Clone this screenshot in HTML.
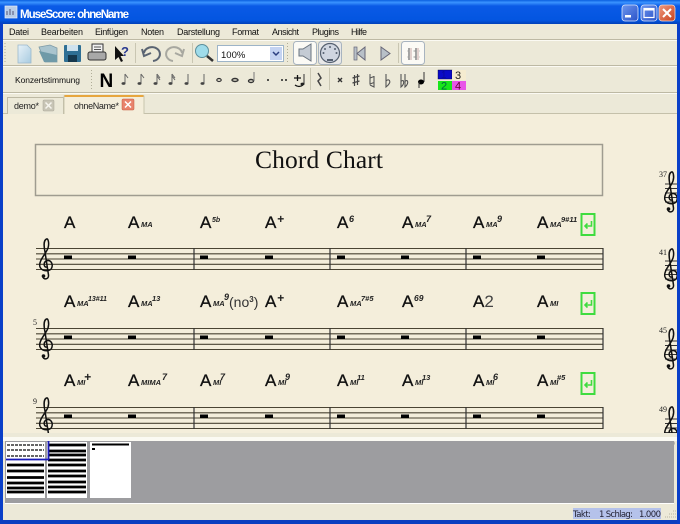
<!DOCTYPE html>
<html><head><meta charset="utf-8"><title>MuseScore: ohneName</title>
<style>
html,body{margin:0;padding:0;background:#ece9d8;width:680px;height:524px;overflow:hidden}
svg{display:block;filter:blur(.35px)}
text{font-family:"Liberation Sans",sans-serif}
.m{font-size:9px;fill:#111}
.c{font-size:17px;fill:#111;stroke:#111;stroke-width:.3}
.s{font-size:7.5px;font-weight:bold;font-style:italic;fill:#222}
.u{font-size:9px;font-weight:bold;font-style:italic;fill:#222}
.n{font-size:8px;fill:#222;font-family:"Liberation Serif",serif}
</style></head><body>
<svg width="680" height="524" viewBox="0 0 680 524" xmlns="http://www.w3.org/2000/svg">
<defs>
<linearGradient id="tb" x1="0" y1="0" x2="0" y2="1"><stop offset="0" stop-color="#0a5fe0"/><stop offset=".1" stop-color="#3a93ff"/><stop offset=".25" stop-color="#0a5ae6"/><stop offset=".85" stop-color="#0355e0"/><stop offset="1" stop-color="#0240b8"/></linearGradient>
<linearGradient id="bb" x1="0" y1="0" x2="1" y2="1"><stop offset="0" stop-color="#6d96ee"/><stop offset="1" stop-color="#2a52c8"/></linearGradient>
<linearGradient id="rb" x1="0" y1="0" x2="1" y2="1"><stop offset="0" stop-color="#ef9a80"/><stop offset="1" stop-color="#c8401c"/></linearGradient>
<linearGradient id="doc" x1="0" y1="0" x2="1" y2="1"><stop offset="0" stop-color="#e8f2f8"/><stop offset="1" stop-color="#a8cbe0"/></linearGradient>
<g id="clef" fill="none" stroke="#111" stroke-width="1.5">
<path d="M8 19C5 20 4 15 7 13C11 11 14 15 13 19C12 24 3 24 1 19C-1 13 7 6 9 0C10.5-5 9-10 7.5-9C5-8 4.5-3 6 4L9.5 27C10 32 4 32 3.5 28"/>
<circle cx="4.500" cy="28" r="1.800" fill="#111" stroke="none"/>
</g>
<g id="staff">
<path d="M36 .5H603M36 5.800H603M36 11H603M36 16.300H603M36 21.500H603" stroke="#4a4433" stroke-width="1.100" fill="none"/>
<path d="M194 0V22M330 0V22M466 0V22M603 0V22" stroke="#333" stroke-width="1.200" fill="none"/>
<use href="#clef" x="39" y="0"/>
<g fill="#000"><rect x="64" y="7.500" width="8" height="3.500"/><rect x="128" y="7.500" width="8" height="3.500"/><rect x="200" y="7.500" width="8" height="3.500"/><rect x="265" y="7.500" width="8" height="3.500"/><rect x="337" y="7.500" width="8" height="3.500"/><rect x="401" y="7.500" width="8" height="3.500"/><rect x="473" y="7.500" width="8" height="3.500"/><rect x="537" y="7.500" width="8" height="3.500"/></g>
</g>
<g id="rstaff"><path d="M665 3H677M665 7.500H677M665 12H677M665 16.500H677M665 21H677" stroke="#333" stroke-width="1"/><use href="#clef" x="664" y="0"/></g>
<g id="ret"><rect x="1" y="1" width="13" height="21" fill="none" stroke="#3fdc3f" stroke-width="2"/><path d="M11 8V13H4.500M7 10.500L4.500 13L7 15.500" fill="none" stroke="#3fdc3f" stroke-width="1.600"/></g>
<g id="q"><path d="M3 1V10" stroke="#666" stroke-width="1"/><ellipse cx="1.500" cy="10.500" rx="2" ry="1.400" fill="#444"/></g>
</defs>

<rect width="680" height="524" fill="#ece9d8"/>
<!-- window frame -->
<rect x="0" y="0" width="680" height="24" fill="url(#tb)"/>
<rect x="0" y="23" width="3" height="501" fill="#0a3fc8"/>
<rect x="677" y="23" width="3" height="501" fill="#0a3fc8"/>
<rect x="0" y="520" width="680" height="4" fill="#0a3fc0"/>
<!-- title -->
<rect x="5" y="6" width="12" height="12" fill="#b8cde8" stroke="#e8f0fa" stroke-width=".7"/><path d="M7 15V11M10 15V9M13 15V11" stroke="#557" stroke-width="1"/>
<text x="20" y="18" textLength="109" style="font-size:11.500px;font-weight:bold;fill:#fff">MuseScore: ohneName</text>
<rect x="622" y="5" width="16" height="16" rx="3" fill="url(#bb)" stroke="#dbe6fb" stroke-width=".8"/><rect x="625" y="15" width="6" height="2.500" fill="#fff"/>
<rect x="641" y="5" width="16" height="16" rx="3" fill="url(#bb)" stroke="#dbe6fb" stroke-width=".8"/><rect x="644" y="8.500" width="10" height="9" fill="none" stroke="#fff" stroke-width="1.200"/><path d="M644 9.500H654" stroke="#fff" stroke-width="2"/>
<rect x="659" y="5" width="16" height="16" rx="3" fill="url(#rb)" stroke="#f3d8cc" stroke-width=".8"/><path d="M663 9L671 17M671 9L663 17" stroke="#fff" stroke-width="2"/>
<!-- menu -->
<text class="m" x="9" y="35" textLength="20">Datei</text><text class="m" x="41" y="35" textLength="42">Bearbeiten</text><text class="m" x="95" y="35" textLength="33">Einfügen</text><text class="m" x="141" y="35" textLength="23">Noten</text><text class="m" x="177" y="35" textLength="43">Darstellung</text><text class="m" x="232" y="35" textLength="27">Format</text><text class="m" x="272" y="35" textLength="27">Ansicht</text><text class="m" x="312" y="35" textLength="27">Plugins</text><text class="m" x="351" y="35" textLength="16">Hilfe</text>
<path d="M3 39.500H677M3 65.500H677M3 92.500H677" stroke="#bdb9a4" stroke-width="1"/>
<path d="M3 40.500H677M3 66.500H677M3 93.500H677" stroke="#fbfaf3" stroke-width="1"/>
<!-- toolbar handles / separators -->
<path d="M5 43V63M91.500 70V90M287.500 43V63" stroke="#b0ad98" stroke-width="1" stroke-dasharray="1 2"/>
<path d="M135.500 43V63M192.500 43V63M398.500 43V63M310.500 68V90M329.500 68V90" stroke="#c9c6b2" stroke-width="1"/>
<!-- new -->
<path d="M18 45H27L31 49V63H18Z" fill="url(#doc)" stroke="#9ab8cc" stroke-width=".8"/>
<!-- open -->
<path d="M39 47L50 45L57 48V62H45Z" fill="#a9c4ce" stroke="#7d9aa6" stroke-width=".8"/><path d="M39 51L57 55V62H44Z" fill="#6f9aa8"/>
<!-- save -->
<rect x="64" y="45" width="17" height="17" rx="1" fill="#2f6f94"/><rect x="67" y="45" width="11" height="6" fill="#cfe2ee"/><rect x="68" y="55" width="9" height="7" fill="#16384d"/>
<!-- print -->
<rect x="92" y="44" width="11" height="9" fill="#f2f2f2" stroke="#333" stroke-width="1"/><path d="M94 47H101M94 49.500H101" stroke="#555"/><rect x="88" y="52" width="18" height="8" rx="2" fill="#a8a8a8" stroke="#333"/>
<!-- help -->
<path d="M115 46L115 60L118.500 57L121 62L123 61L120.500 56L124 56Z" fill="#111"/><text x="121" y="56" style="font-size:13px;font-weight:bold;fill:#2a3a90">?</text>
<!-- undo/redo -->
<path d="M144 53A8 7 0 1 1 153 61M142 49L144 56L151 53" fill="none" stroke="#5a6472" stroke-width="2"/>
<path d="M182 53A8 7 0 1 0 173 61M184 49L182 56L175 53" fill="none" stroke="#a8a8a0" stroke-width="2"/>
<!-- zoom -->
<circle cx="202" cy="51" r="6.500" fill="#9fdcea" stroke="#5b8f9c" stroke-width="1"/><path d="M207 56L213 61" stroke="#333" stroke-width="2.500"/>
<!-- combo -->
<rect x="217.500" y="45.500" width="66" height="16" fill="#fff" stroke="#9db4c8"/><rect x="270" y="47" width="12" height="13" fill="#c4d3f2"/><path d="M273 52L276 55L279 52" fill="none" stroke="#2b3f80" stroke-width="1.500"/>
<text x="221" y="58" style="font-size:9.500px;fill:#111">100%</text>
<!-- speaker/midi buttons -->
<rect x="293.500" y="41.500" width="23" height="23" rx="3" fill="#fbfaf5" stroke="#a8b4c0"/>
<path d="M299 49H303L311 44V61L303 56H299Z" fill="#c4cbd4" stroke="#6a7480"/>
<rect x="318.500" y="41.500" width="23" height="23" rx="3" fill="#e8e8e8" stroke="#a8b4c0"/>
<circle cx="330" cy="53" r="9.500" fill="#cfd5e0" stroke="#556070" stroke-width="1.200"/><g fill="#556070"><circle cx="330" cy="47" r="1"/><circle cx="325" cy="49" r="1"/><circle cx="335" cy="49" r="1"/><circle cx="323.500" cy="53" r="1"/><circle cx="336.500" cy="53" r="1"/><rect x="327" y="59" width="6" height="2"/></g>
<!-- rewind play -->
<rect x="354" y="47" width="3" height="13" fill="#b8c0c8" stroke="#667" stroke-width=".7"/><path d="M365 47V60L357 53.500Z" fill="#b8c0c8" stroke="#667"/>
<path d="M381 47L390 53.500L381 60Z" fill="#b8c0c8" stroke="#667"/>
<rect x="401.500" y="41.500" width="23" height="23" rx="3" fill="#fbfaf5" stroke="#a8b4c0"/>
<path d="M409 48V60M416 48V60" stroke="#888" stroke-width="1.500"/><path d="M411 48V60M418 48V60" stroke="#c8a8a8" stroke-width="1"/><path d="M407.500 51H420M407.500 57H420" stroke="#999" stroke-width="1" stroke-dasharray="2 4"/>
<!-- toolbar 2 -->
<text x="15" y="83" textLength="65" style="font-size:8.500px;fill:#111">Konzertstimmung</text>
<text x="99.500" y="87" style="font-size:19px;font-weight:bold;fill:#000">N</text>
<use href="#q" x="122" y="73"/><use href="#q" x="138" y="73"/><use href="#q" x="154" y="73"/><use href="#q" x="169" y="73"/><use href="#q" x="185" y="73"/><use href="#q" x="201" y="73"/>
<path d="M125 74L128 78M141 74L144 78M157 74L160 78M157 76L160 80M172 74L175 78M172 76L175 80" stroke="#666" stroke-width="1"/>
<ellipse cx="219" cy="80" rx="2.200" ry="1.500" fill="none" stroke="#333" stroke-width="1.200"/>
<ellipse cx="235" cy="80" rx="3" ry="1.500" fill="none" stroke="#333" stroke-width="1.400"/>
<ellipse cx="251" cy="81" rx="2.500" ry="1.500" fill="none" stroke="#333" stroke-width="1.400"/><path d="M254 72V81" stroke="#777"/>
<circle cx="268" cy="80" r="1" fill="#222"/><circle cx="282" cy="80" r="1" fill="#222"/><circle cx="286" cy="80" r="1" fill="#222"/>
<path d="M294 78H301M297.500 75V81M295 85Q299 88 303 85" stroke="#111" stroke-width="1.300" fill="none"/><path d="M304 74V84" stroke="#333"/><ellipse cx="302.500" cy="84" rx="2" ry="1.400" fill="#222"/>
<path d="M318 73L321 78L318 81L321 86" stroke="#444" stroke-width="1.500" fill="none"/>
<path d="M338 78L342 82M342 78L338 82" stroke="#333" stroke-width="1.400"/>
<path d="M354.500 75V86M357.500 74V85M352.500 78L359.500 76M352.500 83L359.500 81" stroke="#444" stroke-width="1.200"/>
<path d="M370 74V84L374 82.500M374 76V87L370 85" stroke="#555" stroke-width="1.100" fill="none"/><path d="M370 78L374 76.500" stroke="#555"/>
<path d="M386 74V87Q391 83 389.500 80.500Q388 79 386 81" stroke="#555" stroke-width="1.100" fill="none"/>
<path d="M401 74V87Q404.500 84 403.500 81Q402.500 80 401 81.500M405 74V87Q408.500 84 407.500 81Q406.500 80 405 81.500" stroke="#555" stroke-width="1.100" fill="none"/>
<path d="M424 72V82" stroke="#333" stroke-width="1"/><ellipse cx="421" cy="82" rx="3" ry="2.500" fill="#000"/><path d="M419 82V88" stroke="#333"/>
<!-- colours -->
<rect x="438" y="70" width="14" height="9" fill="#0a0ac8" stroke="#003" stroke-width=".4"/><text x="441" y="78" style="font-size:10px;fill:#0a0a9a">1</text>
<rect x="452" y="70" width="14" height="10" fill="#f5ecd0"/><text x="455" y="79" style="font-size:11px;fill:#222">3</text>
<rect x="438" y="81" width="14" height="9" fill="#19e619"/><text x="441" y="89.500" style="font-size:11px;fill:#064">2</text>
<rect x="452" y="81" width="14" height="9" fill="#e855e8"/><text x="455" y="89.500" style="font-size:11px;fill:#603">4</text>
<!-- tabs -->
<path d="M3 113.500H677" stroke="#c4c0aa"/>
<rect x="7.500" y="97.500" width="56" height="17" fill="#ece9d8" stroke="#bdb9a4"/>
<text x="14" y="109" textLength="25" style="font-size:9px;fill:#222">demo*</text>
<rect x="43" y="100" width="11" height="11" rx="1" fill="#c8c5b6" stroke="#a8a596" stroke-width=".5"/><path d="M45.500 102.500L51.500 108.500M51.500 102.500L45.500 108.500" stroke="#f6f5ee" stroke-width="1.500"/>
<rect x="64" y="95" width="80" height="19" fill="#f4eedb"/><path d="M64 114V96.500Q64 95.500 65 95.500H143Q144 95.500 144 96.500V114" fill="none" stroke="#c9c5ae"/><rect x="64.500" y="95" width="79" height="2" fill="#e7a63e"/>
<text x="74" y="109" textLength="45" style="font-size:9px;fill:#222">ohneName*</text>
<rect x="122" y="99" width="12" height="11" rx="1" fill="#e8836c" stroke="#c65a3f" stroke-width=".5"/><path d="M125 101.500L131 107.500M131 101.500L125 107.500" stroke="#fff" stroke-width="1.500"/>
<!-- canvas -->
<rect x="3" y="114" width="674" height="323" fill="#f4eedb"/>
<rect x="35.500" y="144.500" width="567" height="51" fill="none" stroke="#9f9c90" stroke-width="1.500"/>
<text x="255" y="168" textLength="128" style="font-family:'Liberation Serif',serif;font-size:25.500px;fill:#111">Chord Chart</text>

<use href="#staff" y="248"/><use href="#staff" y="328"/><use href="#staff" y="407"/>
<text class="n" x="33" y="325">5</text><text class="n" x="33" y="404">9</text>

<!-- row 1 -->
<text class="c" x="64" y="228">A</text>
<text class="c" x="128" y="228">A</text><text class="s" x="141" y="227">MA</text>
<text class="c" x="200" y="228">A</text><text class="u" x="212" y="222" style="font-size:7px">5b</text>
<text class="c" x="265" y="228">A</text><text class="u" x="277" y="223" style="font-size:12px">+</text>
<text class="c" x="337" y="228">A</text><text class="u" x="349" y="222">6</text>
<text class="c" x="402" y="228">A</text><text class="s" x="415" y="227">MA</text><text class="u" x="426" y="222">7</text>
<text class="c" x="473" y="228">A</text><text class="s" x="486" y="227">MA</text><text class="u" x="497" y="222">9</text>
<text class="c" x="537" y="228">A</text><text class="s" x="550" y="227">MA</text><text class="u" x="561" y="222" style="font-size:7.500px">9#11</text>
<!-- row 2 -->
<text class="c" x="64" y="307">A</text><text class="s" x="77" y="306">MA</text><text class="u" x="88" y="301" style="font-size:7px">13#11</text>
<text class="c" x="128" y="307">A</text><text class="s" x="141" y="306">MA</text><text class="u" x="152" y="301" style="font-size:7.500px">13</text>
<text class="c" x="200" y="307">A</text><text class="s" x="213" y="306">MA</text><text class="u" x="224" y="300">9</text><text x="229" y="307" style="font-size:14px;fill:#333">(no<tspan dy="-5" style="font-size:8px;font-weight:bold">3</tspan><tspan dy="5">)</tspan></text>
<text class="c" x="265" y="307">A</text><text class="u" x="277" y="302" style="font-size:12px">+</text>
<text class="c" x="337" y="307">A</text><text class="s" x="350" y="306">MA</text><text class="u" x="361" y="301" style="font-size:7.500px">7#5</text>
<text class="c" x="402" y="307">A</text><text class="u" x="414" y="301" style="font-size:8.500px">69</text>
<text class="c" x="473" y="307">A<tspan style="fill:#444;stroke:none">2</tspan></text>
<text class="c" x="537" y="307">A</text><text class="s" x="550" y="306">MI</text>
<!-- row 3 -->
<text class="c" x="64" y="386">A</text><text class="s" x="77" y="385">MI</text><text class="u" x="84" y="381" style="font-size:12px">+</text>
<text class="c" x="128" y="386">A</text><text class="s" x="141" y="385">MIMA</text><text class="u" x="162" y="380">7</text>
<text class="c" x="200" y="386">A</text><text class="s" x="213" y="385">MI</text><text class="u" x="220" y="380">7</text>
<text class="c" x="265" y="386">A</text><text class="s" x="278" y="385">MI</text><text class="u" x="285" y="380">9</text>
<text class="c" x="337" y="386">A</text><text class="s" x="350" y="385">MI</text><text class="u" x="357" y="380" style="font-size:7.500px">11</text>
<text class="c" x="402" y="386">A</text><text class="s" x="415" y="385">MI</text><text class="u" x="422" y="380" style="font-size:7.500px">13</text>
<text class="c" x="473" y="386">A</text><text class="s" x="486" y="385">MI</text><text class="u" x="493" y="380">6</text>
<text class="c" x="537" y="386">A</text><text class="s" x="550" y="385">MI</text><text class="u" x="557" y="380" style="font-size:7.500px">#5</text>

<use href="#ret" x="580.500" y="213"/><use href="#ret" x="580.500" y="292"/><use href="#ret" x="580.500" y="372"/>

<!-- right edge -->
<use href="#rstaff" y="181"/><use href="#rstaff" y="258"/><use href="#rstaff" y="338"/><use href="#rstaff" y="416"/>
<text class="n" x="659" y="177">37</text><text class="n" x="659" y="255">41</text><text class="n" x="659" y="333">45</text><text class="n" x="659" y="412">49</text>
<rect x="3" y="433" width="674" height="4" fill="#ece9d8"/>
<rect x="677" y="114" width="3" height="410" fill="#0a3fc8"/>

<!-- navigator -->
<rect x="3" y="437" width="674" height="4" fill="#fbfaf3"/>
<rect x="5" y="441" width="669" height="62" fill="#9d9da0"/>
<path d="M5 503.500H674" stroke="#fff"/>
<rect x="6" y="442" width="39" height="56" fill="#fff"/><rect x="47" y="442" width="40" height="56" fill="#fff"/><rect x="90" y="442" width="41" height="56" fill="#fff"/>
<path d="M7 445H44M7 450H44M7 456H44" stroke="#333" stroke-width="1.500" stroke-dasharray="3 1"/>
<path d="M7 465H44M7 471H44M7 477.500H44M7 483H44M7 488H44M7 492H44" stroke="#000" stroke-width="2.800"/>
<path d="M48 445H86M48 451H86M48 455H86M48 460H86M48 465H86M48 471H86M48 476H86M48 482H86M48 487H86M48 492H86" stroke="#000" stroke-width="2.800"/>
<path d="M92 444.500H129" stroke="#000" stroke-width="2"/><rect x="92" y="448" width="3" height="2" fill="#000"/>
<path d="M6 459.500H48.500V441" fill="none" stroke="#1a1ab8" stroke-width="1.800"/>
<!-- status -->
<rect x="573" y="508" width="88" height="11" fill="#b5c2ea"/>
<g style="font-size:8.500px;fill:#223"><text x="573" y="517" textLength="18" style="font-family:'DejaVu Sans',sans-serif">Takt:</text><text x="599" y="517" textLength="34" style="font-family:'DejaVu Sans',sans-serif">1 Schlag:</text><text x="639" y="517" textLength="22" style="font-family:'DejaVu Sans',sans-serif">1.000</text></g>
<path d="M665 517L668 517M669 514L672 514M669 517L672 517M673 511L676 511M673 514L676 514M673 517L676 517" stroke="#b8b5a2" stroke-width="1" stroke-dasharray="1 1"/>
</svg>
</body></html>
